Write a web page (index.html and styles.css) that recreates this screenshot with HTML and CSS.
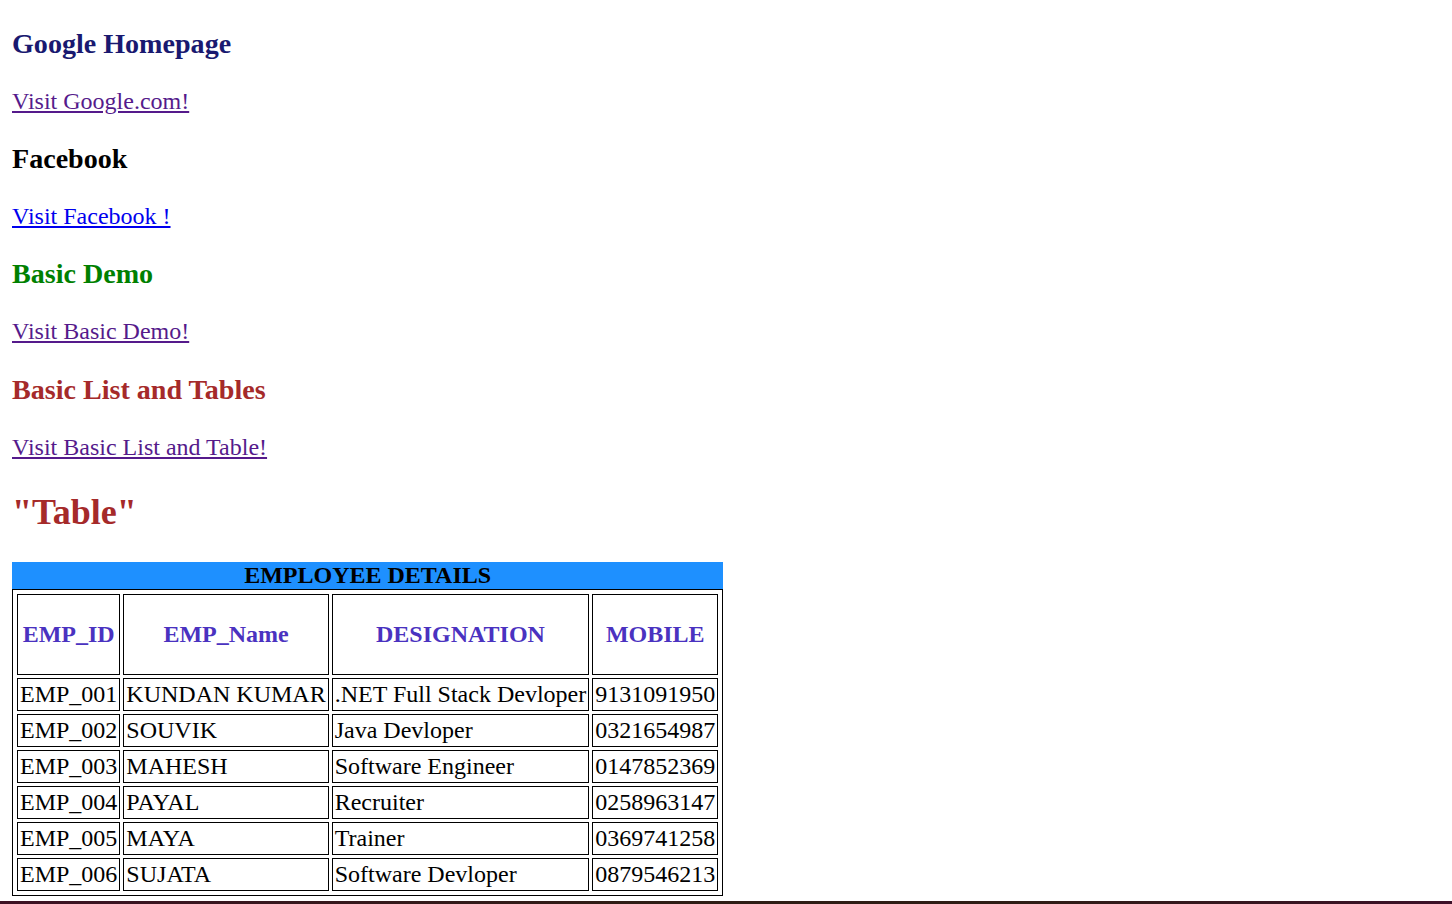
FILE: index.html
```html
<!DOCTYPE html>
<html>
<head>
<meta charset="utf-8">
<title>Links</title>
<link rel="stylesheet" href="styles.css">
</head>
<body>
<main class="page">
<h3 class="h-google">Google Homepage</h3>
<p><a class="visited" href="#">Visit Google.com!</a></p>
<h3 class="h-facebook">Facebook</h3>
<p><a class="fresh" href="#">Visit Facebook !</a></p>
<h3 class="h-demo">Basic Demo</h3>
<p><a class="visited" href="#">Visit Basic Demo!</a></p>
<h3 class="h-list">Basic List and Tables</h3>
<p><a class="visited" href="#">Visit Basic List and Table!</a></p>
<h2 class="h-table">"Table"</h2>
<table class="emp">
<caption class="emp-caption">EMPLOYEE DETAILS</caption>
<tr class="head-row">
<th>EMP_ID</th><th>EMP_Name</th><th>DESIGNATION</th><th>MOBILE</th>
</tr>
<tr><td>EMP_001</td><td>KUNDAN KUMAR</td><td>.NET Full Stack Devloper</td><td>9131091950</td></tr>
<tr><td>EMP_002</td><td>SOUVIK</td><td>Java Devloper</td><td>0321654987</td></tr>
<tr><td>EMP_003</td><td>MAHESH</td><td>Software Engineer</td><td>0147852369</td></tr>
<tr><td>EMP_004</td><td>PAYAL</td><td>Recruiter</td><td>0258963147</td></tr>
<tr><td>EMP_005</td><td>MAYA</td><td>Trainer</td><td>0369741258</td></tr>
<tr><td>EMP_006</td><td>SUJATA</td><td>Software Devloper</td><td>0879546213</td></tr>
</table>
</main>
<div class="dark-band"></div>
</body>
</html>
```

FILE: styles.css
```css
html {
  background: #ffffff;
}
body {
  margin: 0;
  font-family: "Liberation Serif", "Times New Roman", serif;
  font-size: 24px;
  color: #000000;
}
.page {
  display: block;
  padding: 0 12px;
}
h3 {
  font-size: 28.08px;
  font-weight: bold;
  margin: 28.08px 0;
}
h2 {
  font-size: 36px;
  font-weight: bold;
  margin: 29.88px 0;
}
p {
  margin: 24px 0;
}
a {
  text-decoration: underline;
}
a.visited {
  color: #551a8b;
}
a.fresh {
  color: #0000ee;
}
.h-google { color: #191970; }
.h-facebook { color: #000000; }
.h-demo { color: #008000; }
.h-list { color: #a52a2a; }
.h-table { color: #a52a2a; }

.emp {
  border: 1px solid #000000;
  padding: 1px;
  border-spacing: 3px;
  border-collapse: separate;
}
.emp-caption {
  background: #1e90ff;
  font-weight: bold;
  color: #000000;
  text-align: center;
}
.emp th,
.emp td {
  border: 1px solid #000000;
  padding: 1.5px 2px;
}
.emp th {
  color: #4a32c0;
  font-weight: bold;
  text-align: center;
  vertical-align: middle;
  height: 75.5px;
}
.emp td {
  text-align: left;
  vertical-align: middle;
  line-height: 28px;
}
.dark-band {
  margin-top: 5px;
  height: 60px;
  background: linear-gradient(90deg, #3d1224 0%, #2f1d15 45%, #2f1d15 70%, #3d1028 100%);
}
```
